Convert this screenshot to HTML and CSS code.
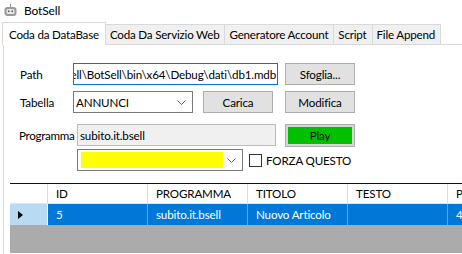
FILE: index.html
```html
<!DOCTYPE html>
<html lang="it">
<head>
    <meta charset="UTF-8">
    <title>BotSell</title>
    <link rel="stylesheet" href="styles.css">
</head>
<body>

    <div class="titlebar">
        <svg class="app-icon" width="13" height="13" viewBox="0 0 13 13">
            <rect x="6" y="0" width="1" height="3" fill="#8a8a8a"/>
            <rect x="0.5" y="3" width="12" height="9" rx="3" fill="#9a9a9a"/>
            <rect x="2.5" y="5" width="8" height="5" rx="1.5" fill="#e6e6e6"/>
            <rect x="4" y="6.5" width="1.5" height="1.5" fill="#555"/>
            <rect x="7.5" y="6.5" width="1.5" height="1.5" fill="#555"/>
        </svg>
        <span>BotSell</span>
    </div>

    <div class="tabs">
        <div class="tab active">Coda da DataBase</div>
        <div class="tab">Coda Da Servizio Web</div>
        <div class="tab">Generatore Account</div>
        <div class="tab">Script</div>
        <div class="tab">File Append</div>
    </div>

    <div class="panel">
        <div class="form">
            <div class="row">
                <label class="lbl">Path</label>
                <div class="textbox focused path"><span>ell\BotSell\bin\x64\Debug\dati\db1.mdb</span></div>
                <button class="btn">Sfoglia...</button>
            </div>
            <div class="row row-tabella">
                <label class="lbl">Tabella</label>
                <div class="combo tabella">
                    <span>ANNUNCI</span>
                    <svg class="chev" width="9" height="5" viewBox="0 0 9 5"><path d="M0.5 0.5 L4.5 4.5 L8.5 0.5" fill="none" stroke="#606060"/></svg>
                </div>
                <button class="btn carica">Carica</button>
                <button class="btn">Modifica</button>
            </div>
            <div class="row row-prog">
                <label class="lbl wide">Programma</label>
                <div class="textbox readonly prog">subito.it.bsell</div>
                <button class="btn play">Play</button>
            </div>
            <div class="row row-forza">
                <div class="combo yellow-combo">
                    <div class="yellow"></div>
                    <svg class="chev" width="9" height="5" viewBox="0 0 9 5"><path d="M0.5 0.5 L4.5 4.5 L8.5 0.5" fill="none" stroke="#606060"/></svg>
                </div>
                <span class="check"></span>
                <span class="check-label">FORZA QUESTO</span>
            </div>
        </div>

        <div class="grid">
            <div class="grid-row head">
                <div class="cell rh"></div>
                <div class="cell">ID</div>
                <div class="cell">PROGRAMMA</div>
                <div class="cell">TITOLO</div>
                <div class="cell">TESTO</div>
                <div class="cell">P</div>
            </div>
            <div class="grid-row selected">
                <div class="cell rh"><span class="arrow"></span></div>
                <div class="cell">5</div>
                <div class="cell">subito.it.bsell</div>
                <div class="cell">Nuovo Articolo</div>
                <div class="cell"></div>
                <div class="cell">40</div>
            </div>
        </div>
    </div>

</body>
</html>
```

FILE: styles.css
```css
/* General */
* {
    margin: 0;
    padding: 0;
    box-sizing: border-box;
}
html, body {
    width: 462px;
    height: 254px;
    overflow: hidden;
    background: #fff;
    font-family: 'Lato', 'Liberation Sans', sans-serif;
    font-size: 11.6px;
    letter-spacing: -0.15px;
    color: #000;
}
/* Title bar */
.titlebar {
    height: 21px;
    display: flex;
    align-items: center;
    gap: 7px;
    padding-left: 4px;
    font-size: 12px;
}
/* Tabs */
.tabs {
    display: flex;
    align-items: flex-end;
    height: 23px;
    padding-left: 2px;
    white-space: nowrap;
    letter-spacing: -0.2px;
}
.tab {
    height: 20px;
    padding: 0 5px 0 4px;
    display: flex;
    align-items: center;
    background: #f0f0f0;
    border: 1px solid #d9d9d9;
    border-left: none;
    border-bottom: none;
}
.tab.active {
    height: 23px;
    background: #fff;
    border-left: 1px solid #d9d9d9;
    padding: 0 6px;
    position: relative;
    top: 1px;
}
/* Panel */
.panel {
    margin-left: 3px;
    border-top: 1px solid #d9d9d9;
    border-left: 1px solid #d9d9d9;
    height: 210px;
}
.form {
    padding: 18px 0 0 15px;
    display: flex;
    flex-direction: column;
}
.row {
    display: flex;
    align-items: center;
    height: 22px;
    white-space: nowrap;
}
.row-tabella {
    margin-top: 6px;
}
.row-prog {
    margin-top: 11px;
}
.row-forza {
    margin-top: 3px;
}
.lbl {
    width: 54px;
    padding-left: 1px;
}
.lbl.wide {
    width: 58px;
    padding-left: 0;
    letter-spacing: -0.3px;
}
.textbox, .combo {
    height: 22px;
    border: 1px solid #7a7a7a;
    background: #fff;
    display: flex;
    align-items: center;
    padding-left: 2px;
    overflow: hidden;
}
.textbox.focused {
    border-color: #0078d7;
    justify-content: flex-end;
    padding-right: 1px;
}
.path {
    width: 205px;
}
.readonly {
    background: #f0f0f0;
    border-color: #bcbcbc;
}
.prog {
    width: 199px;
}
.combo {
    justify-content: space-between;
    padding-right: 6px;
}
.tabella {
    width: 120px;
}
.yellow-combo {
    width: 166px;
    margin-left: 58px;
    padding-left: 3px;
}
.yellow {
    width: 142px;
    height: 16px;
    background: #ffff00;
}
.btn {
    width: 70px;
    height: 22px;
    margin-left: 7px;
    background: #e1e1e1;
    border: 1px solid #adadad;
    font-family: inherit;
    font-size: inherit;
    letter-spacing: inherit;
    color: #000;
}
.carica {
    margin-left: 10px;
    margin-right: 5px;
}
.play {
    margin-left: 9px;
    height: 23px;
    background: #00c000;
    border: 3px solid #d6d6d6;
    outline: 1px solid #adadad;
    outline-offset: -1px;
}
.check {
    width: 13px;
    height: 13px;
    border: 1px solid #333;
    margin-left: 6px;
    margin-right: 4px;
}
/* Data grid */
.grid {
    margin: 12px 0 0 6px;
    background: #ababab;
    height: 70px;
    border-top: 1px solid #111;
}
.grid-row {
    display: flex;
    height: 20px;
}
.grid-row.selected {
    height: 21px;
    background: #0078d7;
    color: #fff;
}
.cell {
    width: 100px;
    flex-shrink: 0;
    padding-left: 8px;
    display: flex;
    align-items: center;
    border-right: 1px solid #dcdcdc;
    white-space: nowrap;
}
.head {
    background: #fff;
}
.head .cell {
    border-bottom: 1px solid #e5e5e5;
}
.cell.rh {
    width: 38px;
}
.selected .cell {
    border-right-color: #5aa6e6;
}
.selected .cell.rh {
    background: #b9daf3;
    border-right-color: #fff;
}
.arrow {
    width: 0;
    height: 0;
    border-top: 4px solid transparent;
    border-bottom: 4px solid transparent;
    border-left: 5px solid #000;
}
```
